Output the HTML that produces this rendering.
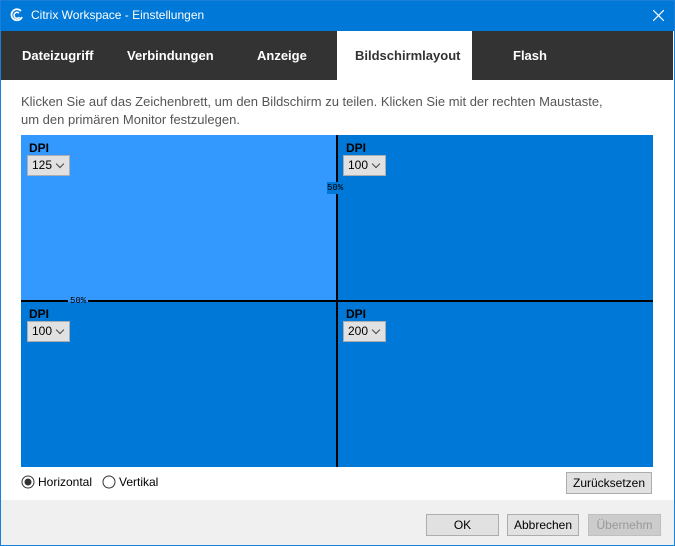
<!DOCTYPE html>
<html><head><meta charset="utf-8"><style>
*{margin:0;padding:0;box-sizing:border-box}
body{width:675px;height:546px;position:relative;background:#fff;font-family:"Liberation Sans",sans-serif;overflow:hidden}
.abs{position:absolute}
#win{left:0;top:0;width:675px;height:546px;border:1px solid #1a7fd8}
#title{left:0;top:0;width:675px;height:31px;background:#0078d7;color:#fff;font-size:12px}
#tabs{left:1px;top:31px;width:672px;height:49px;background:#333}
.tab{position:absolute;top:31px;height:49px;line-height:49px;color:#fff;font-weight:bold;font-size:13px}
.pane{position:absolute;background:#0078d7}
.dpi{position:absolute;font-weight:bold;font-size:12px;color:#000}
.sel{position:absolute;width:43px;height:21px;background:#e1e1e1;border:1px solid #adadad;font-size:12px;padding-left:4px;line-height:19px;color:#000}
.sel:after{content:"";position:absolute;right:6px;top:5px;width:5px;height:5px;border-right:1px solid #444;border-bottom:1px solid #444;transform:rotate(45deg)}
.btn{position:absolute;height:22px;background:#e1e1e1;border:1px solid #adadad;font-size:12px;text-align:center;line-height:20px;color:#000}
.pct{position:absolute;font-size:9px;font-family:"Liberation Mono",monospace;color:#000}
</style></head><body>
<div class="abs" id="title">
<svg class="abs" style="left:10px;top:8px" width="14" height="14" viewBox="0 0 14 14"><path d="M11 3A5.5 5.5 0 1 0 12 9" stroke="#fff" stroke-width="1.8" fill="none"/><path d="M9 5A3 3 0 1 0 9.5 9" stroke="#fff" stroke-width="1.5" fill="none"/></svg>
<span class="abs" style="left:31px;top:8px">Citrix Workspace - Einstellungen</span>
<svg class="abs" style="left:653px;top:10px" width="11" height="11"><path d="M0 0L11 11M11 0L0 11" stroke="#fff" stroke-width="1.2"/></svg>
</div>
<div class="abs" id="tabs"></div>
<div class="abs" style="left:337px;top:31px;width:135px;height:49px;background:#fff"></div>
<div class="tab" style="left:22px">Dateizugriff</div>
<div class="tab" style="left:127px">Verbindungen</div>
<div class="tab" style="left:257px">Anzeige</div>
<div class="tab" style="left:355px;color:#333">Bildschirmlayout</div>
<div class="tab" style="left:513px">Flash</div>
<div class="abs" style="left:21px;top:93px;font-size:13px;color:#555;line-height:18px;width:650px">Klicken Sie auf das Zeichenbrett, um den Bildschirm zu teilen. Klicken Sie mit der rechten Maustaste,<br>um den primären Monitor festzulegen.</div>
<div class="pane" style="left:21px;top:135px;width:632px;height:332px"></div>
<div class="pane" style="left:21px;top:135px;width:315px;height:165px;background:#3399ff"></div>
<div class="abs" style="left:336px;top:135px;width:2px;height:332px;background:#000"></div>
<div class="abs" style="left:21px;top:300px;width:632px;height:2px;background:#000"></div>
<div class="pct" style="left:68px;top:296px;background:#3399ff;padding:0 2px;height:6px;line-height:10px">50%</div>
<div class="pct" style="left:327px;top:182px;background:#0078d7;height:12px;line-height:12px">50%</div>
<div class="dpi" style="left:29px;top:141px">DPI</div><div class="sel" style="left:27px;top:155px">125</div>
<div class="dpi" style="left:346px;top:141px">DPI</div><div class="sel" style="left:343px;top:155px">100</div>
<div class="dpi" style="left:29px;top:307px">DPI</div><div class="sel" style="left:27px;top:321px">100</div>
<div class="dpi" style="left:346px;top:307px">DPI</div><div class="sel" style="left:343px;top:321px">200</div>
<svg class="abs" style="left:21px;top:475px" width="14" height="14"><circle cx="7" cy="7" r="6" fill="#fff" stroke="#333"/><circle cx="7" cy="7" r="3.5" fill="#333"/></svg>
<div class="abs" style="left:38px;top:475px;font-size:12px">Horizontal</div>
<svg class="abs" style="left:102px;top:475px" width="14" height="14"><circle cx="7" cy="7" r="6" fill="#fff" stroke="#333"/></svg>
<div class="abs" style="left:119px;top:475px;font-size:12px">Vertikal</div>
<div class="btn" style="left:566px;top:472px;width:86px">Zurücksetzen</div>
<div class="abs" style="left:1px;top:500px;width:673px;height:45px;background:#f0f0f0"></div>
<div class="btn" style="left:426px;top:514px;width:73px">OK</div>
<div class="btn" style="left:507px;top:514px;width:72px">Abbrechen</div>
<div class="btn" style="left:588px;top:514px;width:73px;background:#ccc;border-color:#bfbfbf;color:#999">Übernehm</div>
<div class="abs" id="win"></div>
</body></html>
